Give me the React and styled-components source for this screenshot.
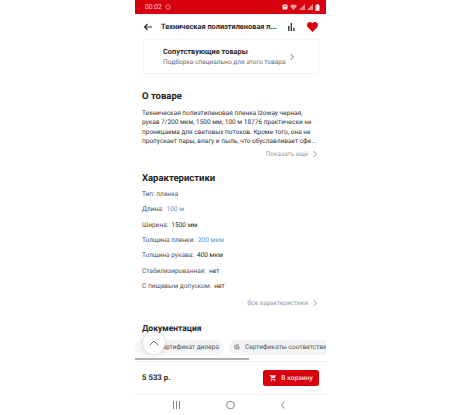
import React from 'react';
import styled, { createGlobalStyle } from 'styled-components';

const Global = createGlobalStyle`
  html, body { margin: 0; padding: 0; background: #fff; }
  body { font-family: Roboto, "Noto Sans", "Liberation Sans", sans-serif; text-rendering: geometricPrecision; }
`;
const Page = styled.div`display:flex;justify-content:center;height:415px;overflow:hidden;background:#fff;`;
const Phone = styled.div`position:relative;width:191px;height:415px;display:flex;flex-direction:column;overflow:hidden;background:#fff;opacity:.999;`;
const StatusBar = styled.div`height:14px;flex:none;background:#d8000f;color:#fbd5d5;display:flex;align-items:center;justify-content:space-between;padding:0 6px 0 10px;font-size:6.8px;`;
const StatusLeft = styled.div`display:flex;align-items:center;gap:3px;`;
const StatusIcons = styled.div`display:flex;align-items:center;gap:2px;`;
const Header = styled.div`height:25px;flex:none;display:flex;align-items:center;padding:0 8px 0 8px;`;
const Title = styled.div`flex:1;margin-left:8px;font-size:7.4px;font-weight:700;color:#26262a;white-space:nowrap;overflow:hidden;`;
const HeaderIcons = styled.div`display:flex;align-items:center;gap:12px;`;
const Card = styled.div`margin:0 7px 0 8px;height:35px;flex:none;box-sizing:border-box;border:1px solid #f3f3f4;border-radius:2px;display:flex;align-items:center;justify-content:space-between;padding:0 22px 0 19px;box-shadow:0 0 2px rgba(0,0,0,.03);`;
const CardTitle = styled.div`font-size:7.4px;font-weight:700;color:#2a2a2e;line-height:11px;`;
const CardSub = styled.div`font-size:6.55px;color:#66666b;line-height:10px;white-space:nowrap;`;
const Section = styled.div`padding:0 7px 0 7px;flex:none;margin-top:${p => p.$top}px;`;
const H2 = styled.div`font-size:${p => p.$size || 9.5}px;font-weight:700;color:#232327;line-height:13px;`;
const Para = styled.div`margin-top:6px;font-size:6.5px;line-height:9.4px;color:#2f2f33;white-space:nowrap;`;
const More = styled.div`display:flex;justify-content:flex-end;align-items:center;gap:3px;margin-top:${p => p.$top}px;font-size:6.45px;color:#98989c;line-height:10px;`;
const Specs = styled.div`margin-top:1.5px;`;
const Spec = styled.div`height:15.4px;display:flex;align-items:center;gap:3px;font-size:6.55px;color:#505055;`;
const Value = styled.span`color:${p => (p.$link ? '#4d97cc' : '#1f1f23')};`;
const Chips = styled.div`display:flex;gap:5px;margin-top:4px;padding-left:7px;white-space:nowrap;flex:none;`;
const Chip = styled.div`flex:none;height:15px;border-radius:8px;background:#f3f4f5;display:flex;align-items:center;gap:4px;padding:0 5px;font-size:6.55px;color:#505054;box-sizing:border-box;${p => p.$first && 'width:89px;justify-content:flex-end;margin-left:-7px;'}`;
const Scroll = styled.div`height:4px;flex:none;position:relative;border-bottom:1px solid #f0f0f1;margin-top:3px;box-sizing:border-box;`;
const Thumb = styled.div`position:absolute;left:0;top:0;height:2px;width:114px;background:#b0b0b3;`;
const Footer = styled.div`height:33px;flex:none;box-sizing:border-box;display:flex;align-items:center;justify-content:space-between;padding:0 7px 0 7px;border-bottom:1px solid #f1f1f2;`;
const Price = styled.div`font-size:7.8px;font-weight:700;color:#2b2b2f;`;
const Buy = styled.div`width:56px;height:16px;border-radius:2.5px;background:#d8000f;color:#fde0e0;display:flex;align-items:center;justify-content:center;gap:4px;font-size:6.7px;font-weight:500;`;
const Nav = styled.div`flex:1;display:flex;align-items:center;justify-content:space-between;padding:0 40px 0 37px;`;
const Fab = styled.div`position:absolute;left:8px;top:332px;width:22px;height:22px;border-radius:50%;background:#fff;box-shadow:0 0 4px rgba(0,0,0,.18);display:flex;align-items:center;justify-content:center;`;

const Chevron = ({ c = '#8a8a8e', s = 8 }) => (
  <svg width={s} height={s} viewBox="0 0 8 8"><path d="M2.5 1 L5.5 4 L2.5 7" fill="none" stroke={c} strokeWidth="1" /></svg>
);

export default function App() {
  return (
    <Page>
      <Global />
      <Phone>
        <StatusBar>
          <StatusLeft>
            <span>00:02</span>
            <svg width="6" height="6" viewBox="0 0 6 6"><circle cx="3" cy="3" r="2.2" fill="none" stroke="#f3a5a5" strokeWidth=".8" /></svg>
          </StatusLeft>
          <StatusIcons>
            <svg width="6" height="6" viewBox="0 0 6 6"><rect x=".5" y=".5" width="5" height="5" rx="1" fill="#fbe3e3" /><path d="M1.5 1.5L3 3L4.5 1.5" stroke="#d8000f" strokeWidth=".7" fill="none" /></svg>
            <svg width="7" height="6" viewBox="0 0 7 6"><path d="M0 2A5 5 0 0 1 7 2L3.5 6Z" fill="#f1a0a0" /></svg>
            <svg width="6" height="6" viewBox="0 0 6 6"><path d="M0 6L6 0V6Z" fill="#ee8a8a" /></svg>
            <svg width="6" height="6" viewBox="0 0 6 6"><path d="M0 6L6 0V6Z" fill="#ee8a8a" /></svg>
            <svg width="5" height="7" viewBox="0 0 5 7"><path d="M1.5 0H3.5V1H4.500V7H.5V1H1.5Z" fill="#fde8e8" /></svg>
          </StatusIcons>
        </StatusBar>
        <Header>
          <svg width="10" height="10" viewBox="0 0 10 10"><path d="M9 5H1.5M4.5 2L1.5 5L4.500 8" fill="none" stroke="#26262a" strokeWidth="1.1" /></svg>
          <Title>Техническая полиэтиленовая п...</Title>
          <HeaderIcons>
            <svg width="8" height="8" viewBox="0 0 8 8"><path d="M1 3h1.4v5H1zM3.6 0h1.4v8H3.6zM6.2 5h1.4v3H6.2z" fill="#3a3a3e" /></svg>
            <svg width="11" height="10" viewBox="0 0 11 10"><path d="M5.5 10L1 5.4C-.4 3.9-.2 1.6 1.3.6 2.8-.4 4.6.1 5.5 1.5 6.4.1 8.200-.4 9.700.6 11.200 1.600 11.400 3.900 10 5.400Z" fill="#d8000f" /></svg>
          </HeaderIcons>
        </Header>
        <Card>
          <div>
            <CardTitle>Сопутствующие товары</CardTitle>
            <CardSub>Подборка специально для этого товара</CardSub>
          </div>
          <Chevron c="#77777b" />
        </Card>
        <Section $top={16}>
          <H2>О товаре</H2>
          <Para>
            Техническая полиэтиленовая пленка Izoway черная,<br />
            рукав 7/200 мкм, 1500 мм, 100 м 18776 практически не<br />
            проницаема для световых потоков. Кроме того, она не<br />
            пропускает пары, влагу и пыль, что обуславливает сфе...
          </Para>
          <More $top={2}>Показать ещё <Chevron c="#9a9a9e" /></More>
        </Section>
        <Section $top={13}>
          <H2>Характеристики</H2>
          <Specs>
            <Spec>Тип: пленка</Spec>
            <Spec>Длина: <Value $link>100 м</Value></Spec>
            <Spec>Ширина: <Value>1500 мм</Value></Spec>
            <Spec>Толщина пленки: <Value $link>200 мкм</Value></Spec>
            <Spec>Толщина рукава: <Value>400 мкм</Value></Spec>
            <Spec>Стабилизированная: <Value>нет</Value></Spec>
            <Spec>С пищевым допуском: <Value>нет</Value></Spec>
          </Specs>
          <More $top={3.8}>Все характеристики <Chevron c="#9a9a9e" /></More>
        </Section>
        <Section $top={15}>
          <H2 $size={8.5}>Документация</H2>
        </Section>
        <Chips>
          <Chip $first>Сертификат дилера</Chip>
          <Chip>
            <svg width="7" height="6" viewBox="0 0 7 6"><path d="M5 1H2.200a2 2 0 0 0 0 4H5M5 2.200H2.700a.8.8 0 0 0 0 1.600H6" fill="none" stroke="#66666a" strokeWidth=".7" /></svg>
            Сертификаты соответствия
          </Chip>
        </Chips>
        <Scroll><Thumb /></Scroll>
        <Footer>
          <Price>5 533 р.</Price>
          <Buy>
            <svg width="8" height="8" viewBox="0 0 24 24"><path fill="#fde0e0" d="M7 18c-1.100 0-1.990.9-1.990 2S5.900 22 7 22s2-.9 2-2-.9-2-2-2zM1 2v2h2l3.600 7.590-1.350 2.450c-.16.28-.25.61-.25.96 0 1.100.9 2 2 2h12v-2H7.420c-.14 0-.25-.11-.25-.25l.03-.12.9-1.630h7.450c.75 0 1.410-.41 1.750-1.030l3.580-6.490c.08-.14.12-.31.12-.48 0-.55-.45-1-1-1H5.210l-.94-2H1zm16 16c-1.100 0-1.990.9-1.990 2s.89 2 1.990 2 2-.9 2-2-.9-2-2-2z" /></svg>
            В корзину
          </Buy>
        </Footer>
        <Nav>
          <svg width="9" height="8" viewBox="0 0 9 8"><path d="M1.500 0v8M4.500 0v8M7.500 0v8" stroke="#77777b" strokeWidth=".9" /></svg>
          <svg width="9" height="8" viewBox="0 0 9 8"><rect x=".8" y=".6" width="7.400" height="6.800" rx="2.400" fill="none" stroke="#77777b" strokeWidth=".9" /></svg>
          <svg width="6" height="8" viewBox="0 0 6 8"><path d="M4.500 .5L1.500 4L4.500 7.500" fill="none" stroke="#77777b" strokeWidth=".9" /></svg>
        </Nav>
        <Fab>
          <svg width="10" height="6" viewBox="0 0 10 6"><path d="M.8 5.200L5 1L9.200 5.200" fill="none" stroke="#6d6d71" strokeWidth="1" /></svg>
        </Fab>
      </Phone>
    </Page>
  );
}
